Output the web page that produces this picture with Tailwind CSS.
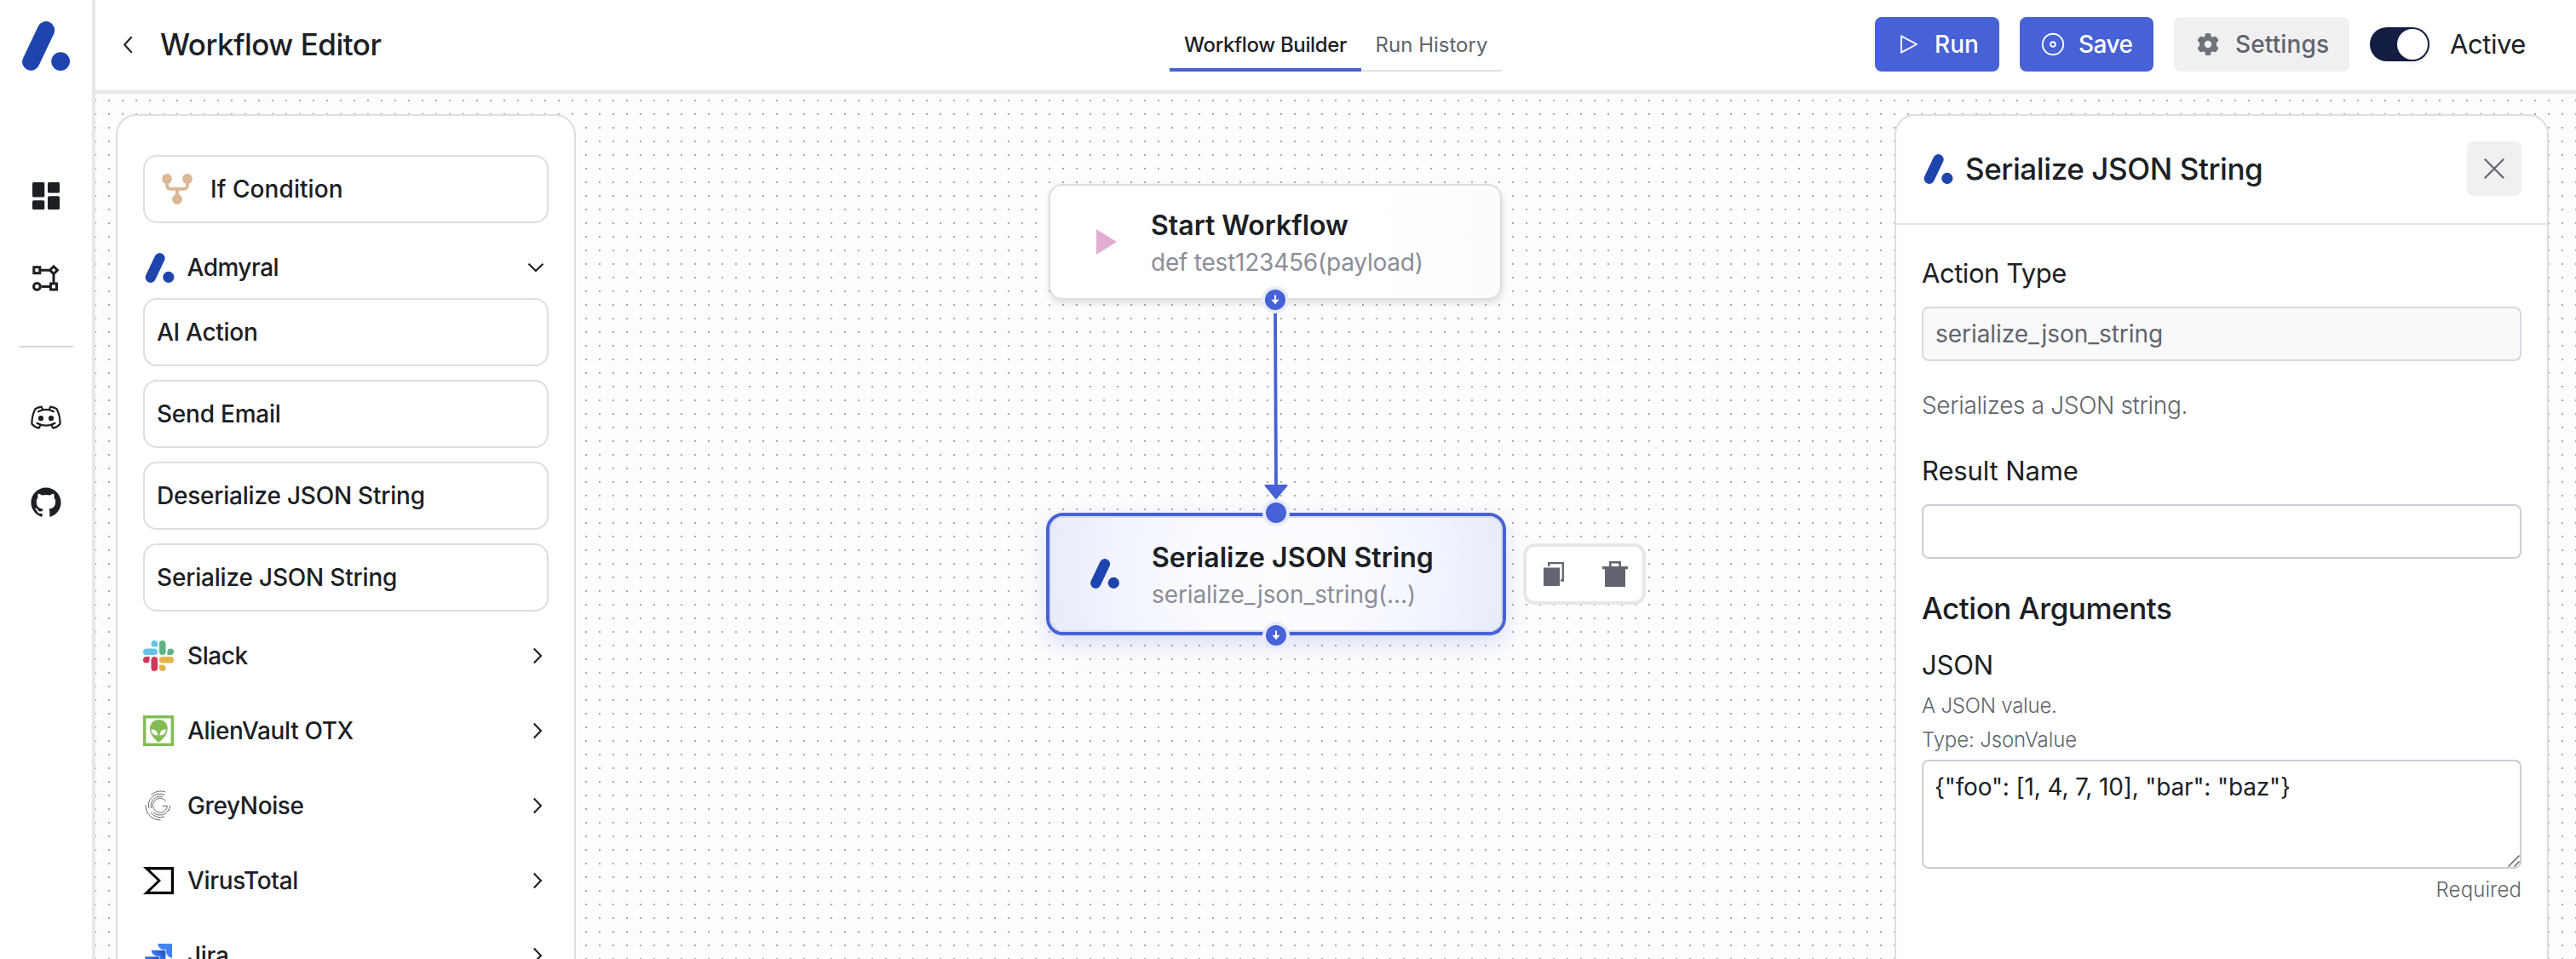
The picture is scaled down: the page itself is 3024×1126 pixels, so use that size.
<!DOCTYPE html>
<html lang="en">
<head>
<meta charset="utf-8">
<title>Workflow Editor</title>
<script src="https://cdn.jsdelivr.net/npm/@tailwindcss/browser@4"></script>
</head>
<body class="flex h-[1126px] w-[3024px] overflow-hidden bg-white font-[Inter,sans-serif] text-[#1c2024]">

<svg class="hidden">
  <symbol id="logo" viewBox="0 0 56 58">
    <path d="M10.3 47.6 28 10.3" stroke="#1e45ae" stroke-width="20.4" stroke-linecap="round" fill="none"/>
    <circle cx="45.1" cy="47.1" r="10.9" fill="#1e45ae"/>
  </symbol>
  <symbol id="chev-right" viewBox="0 0 12 20"><path d="M1.8 1.5 10 10 1.8 18.5" fill="none" stroke="#1c2024" stroke-width="2.1"/></symbol>
  <symbol id="slack-part" viewBox="0 0 24 24"><path d="M8.834 5.042a2.528 2.528 0 0 1-2.521-2.52A2.528 2.528 0 0 1 8.834 0a2.528 2.528 0 0 1 2.521 2.522v2.52H8.834zM8.834 6.313a2.528 2.528 0 0 1 2.521 2.521 2.528 2.528 0 0 1-2.521 2.521H2.522A2.528 2.528 0 0 1 0 8.834a2.528 2.528 0 0 1 2.522-2.521h6.312z"/></symbol>
  <symbol id="handle-out" viewBox="0 0 32 32"><circle cx="16" cy="16" r="16" fill="#e6ebfd"/><circle cx="16" cy="16" r="12" fill="#4761d6"/><path d="M16 10.5V17" stroke="#fff" stroke-width="2"/><path d="M11.4 15.8H20.6L16 21.2z" fill="#fff"/></symbol>
</svg>

<!-- Sidebar -->
<aside class="flex w-[112px] shrink-0 flex-col items-center border-r-4 border-[#e5e7eb]">
  <svg class="mt-[25px] h-[58px] w-[56px]"><use href="#logo"/></svg>
  <svg class="mt-[131px] size-8" viewBox="0 0 32 32" fill="#1c2024">
    <rect width="14.3" height="17.5" rx="1.5"/><rect x="18" width="14" height="12.6" rx="1.5"/>
    <rect y="21.3" width="14.3" height="10.7" rx="1.5"/><rect x="18" y="16.2" width="14" height="15.8" rx="1.5"/>
  </svg>
  <svg class="mt-16 size-8" viewBox="0 0 32 32" fill="none" stroke="#1c2024" stroke-width="3">
    <rect x="1.8" y="3.7" width="7" height="7"/><path d="M10 7.2h10M25 12v10M10.5 26.5H21"/>
    <path d="M25 2.8 29.4 7.2 25 11.6 20.6 7.2z"/><circle cx="5.4" cy="26.4" r="3.9"/><rect x="21.5" y="23" width="7" height="7"/>
  </svg>
  <div class="mt-16 h-0.5 w-16 bg-[#d9d9e0]"></div>
  <svg class="mt-[68px] h-7 w-9" viewBox="0 0 36 28" fill="none" stroke="#1c2024" stroke-width="2.2" stroke-linecap="round" stroke-linejoin="round">
    <path d="M14 4.6 12.8 1.7C9.6 2.2 7.4 2.8 5.4 4.2 3 8.6 1.4 14.5 1.4 21.6 3.5 24.4 6.3 25.9 9.6 26.6L11.6 23.4"/>
    <path d="M22 4.6 23.2 1.7C26.4 2.2 28.6 2.8 30.6 4.2 33 8.6 34.6 14.5 34.6 21.6 32.5 24.4 29.7 25.9 26.4 26.6L24.4 23.4"/>
    <path d="M9 7.2C14.5 4.4 21.5 4.4 27 7.2M7.5 20.8C13.5 24.6 22.5 24.6 28.5 20.8"/>
    <circle cx="12" cy="15.2" r="3.1" fill="#1c2024" stroke="none"/><circle cx="24" cy="15.2" r="3.1" fill="#1c2024" stroke="none"/>
  </svg>
  <svg class="mt-[68px] size-[36px]" viewBox="-.3 0 24.6 24.6" fill="#1c2024"><path d="M12 .297c-6.63 0-12 5.373-12 12 0 5.303 3.438 9.8 8.205 11.385.6.113.82-.258.82-.577 0-.285-.01-1.04-.015-2.04-3.338.724-4.042-1.61-4.042-1.61C4.422 18.07 3.633 17.7 3.633 17.7c-1.087-.744.084-.729.084-.729 1.205.084 1.838 1.236 1.838 1.236 1.07 1.835 2.809 1.305 3.495.998.108-.776.417-1.305.76-1.605-2.665-.3-5.466-1.332-5.466-5.93 0-1.31.465-2.38 1.235-3.22-.135-.303-.54-1.523.105-3.176 0 0 1.005-.322 3.3 1.23.96-.267 1.98-.399 3-.405 1.02.006 2.04.138 3 .405 2.28-1.552 3.285-1.23 3.285-1.23.645 1.653.24 2.873.12 3.176.765.84 1.23 1.91 1.23 3.22 0 4.61-2.805 5.625-5.475 5.92.42.36.81 1.096.81 2.22 0 1.606-.015 2.896-.015 3.286 0 .315.21.69.825.57C20.565 22.092 24 17.592 24 12.297c0-6.627-5.373-12-12-12"/></svg>
</aside>

<div class="flex min-w-0 grow flex-col">
  <!-- Header -->
  <header class="flex h-[110px] shrink-0 items-center border-b-4 border-[#e5e7eb] pb-[2px] whitespace-nowrap">
    <div class="flex w-[1261px] shrink-0 items-center">
      <svg class="ml-[32px] h-[21px] w-[12px]" viewBox="0 0 12 21" fill="none" stroke="#1c2024" stroke-width="2.1"><path d="M10.6 1.2 2.2 10.5 10.6 19.8"/></svg>
      <h1 class="ml-[32px] text-[35px] font-medium tracking-[-0.5px]">Workflow Editor</h1>
    </div>
    <nav class="flex h-16 w-[390px] shrink-0 text-[24px]">
      <div class="flex w-[225px] items-center justify-center border-b-4 border-[#4761d6] pt-[5px] font-medium tracking-[-0.35px]">Workflow Builder</div>
      <div class="flex w-[165px] items-center justify-center border-b-2 border-[#e0e1e6] pt-[3px] text-[#60646c]">Run History</div>
    </nav>
    <div class="ml-[438px] flex shrink-0 items-center gap-6 text-[28px] font-medium">
      <button class="flex h-16 w-[146px] items-center gap-[14px] rounded-lg bg-[#4761d6] pl-6 text-white">
        <svg class="size-8 shrink-0" viewBox="0 0 32 32" fill="none" stroke="#fff" stroke-width="1.9" stroke-linejoin="round"><path d="M7 6.3 25 16 7 25.7z"/></svg>Run
      </button>
      <button class="flex h-16 w-[157px] items-center gap-[14px] rounded-lg bg-[#4761d6] pl-[23px] tracking-[-0.5px] text-white">
        <svg class="size-8 shrink-0" viewBox="0 0 32 32" fill="none" stroke="#fff" stroke-width="1.9"><circle cx="16" cy="16" r="12.2"/><circle cx="16" cy="16" r="2.8"/></svg>Save
      </button>
      <button class="flex h-16 w-[206px] items-center gap-4 rounded-lg bg-[#f0f0f3] pl-6 tracking-[0.13px] text-[#60646c]">
        <svg class="size-8 shrink-0" viewBox="0 0 32 32"><path fill="#6e727a" stroke="#6e727a" stroke-width="2" stroke-linejoin="round" d="M14 4h4l.8 3.3 2.7 1.5 3.3-1 2.4 3.6-2.3 2.7v3.8l2.3 2.7-2.4 3.6-3.3-1-2.7 1.5L18 28h-4l-.8-3.3-2.7-1.5-3.3 1-2.4-3.6 2.3-2.7v-3.8L4.8 11.4l2.4-3.6 3.3 1 2.7-1.5z"/><circle cx="16" cy="16" r="4.2" fill="#f0f0f3"/></svg>Settings
      </button>
      <div class="flex h-10 w-[70px] items-center justify-end rounded-full bg-[#141d43] pr-0.5"><div class="size-9 rounded-full bg-white shadow-[0_2px_6px_rgba(0,0,0,0.15)]"></div></div>
      <span class="text-[31px] font-normal tracking-[-0.45px]">Active</span>
    </div>
  </header>

  <!-- Canvas -->
  <main class="relative flex h-[1016px] justify-between overflow-hidden bg-[#fdfdfd] pt-6 pr-8 pl-6">
    <svg class="absolute inset-0 size-full">
      <defs><pattern id="dots" width="16" height="16" patternUnits="userSpaceOnUse"><rect x="0" y="7" width="1" height="2" fill="#a9a9ac"/><rect x="15" y="7" width="1" height="2" fill="#a9a9ac"/></pattern></defs>
      <rect width="100%" height="100%" fill="url(#dots)"/>
    </svg>

    <!-- Action library -->
    <section class="relative h-[1100px] w-[540px] shrink-0 rounded-3xl border-2 border-[#dddde3] bg-white px-[30px] pt-[46px] text-[28px] font-medium">
      <div class="flex h-20 items-center rounded-2xl border-2 border-[#dddde3]">
        <svg class="ml-5 size-9" viewBox="0 0 36 36" fill="#d9b797"><circle cx="6" cy="6" r="5.9"/><circle cx="30" cy="6" r="5.9"/><circle cx="18" cy="30" r="5.9"/><path d="M6 8v5.2q0 4.6 4.6 4.6h14.8q4.6 0 4.6-4.6V8M18 18v9" fill="none" stroke="#d9b797" stroke-width="3.8"/></svg>
        <span class="ml-[21px] tracking-[0.08px]">If Condition</span>
      </div>
      <div class="mt-4 flex h-[72px] items-center">
        <svg class="ml-[1.5px] h-[35px] w-[35px]"><use href="#logo"/></svg>
        <span class="ml-[15px] tracking-[-0.5px]">Admyral</span>
        <svg class="mr-[5px] ml-auto h-[12px] w-[20px]" viewBox="0 0 20 12" fill="none" stroke="#1c2024" stroke-width="2.1"><path d="M1.5 1.8 10 10 18.5 1.8"/></svg>
      </div>
      <div class="flex flex-col gap-4">
        <div class="flex h-20 items-center rounded-2xl border-2 border-[#dddde3] pl-[14px] tracking-[-0.28px]">AI Action</div>
        <div class="flex h-20 items-center rounded-2xl border-2 border-[#dddde3] pl-[14px] tracking-[-0.23px]">Send Email</div>
        <div class="flex h-20 items-center rounded-2xl border-2 border-[#dddde3] pl-[14px] tracking-[-0.22px]">Deserialize JSON String</div>
        <div class="flex h-20 items-center rounded-2xl border-2 border-[#dddde3] pl-[14px] tracking-[-0.19px]">Serialize JSON String</div>
      </div>
      <div class="mt-2 flex h-[88px] items-center gap-4">
        <svg class="size-9" viewBox="0 0 24 24"><use href="#slack-part" width="24" height="24" fill="#65c2e8"/><use href="#slack-part" width="24" height="24" fill="#5cb382" transform="rotate(90 12 12)"/><use href="#slack-part" width="24" height="24" fill="#e3b34c" transform="rotate(180 12 12)"/><use href="#slack-part" width="24" height="24" fill="#cf375c" transform="rotate(270 12 12)"/></svg>
        <span class="tracking-[-0.4px]">Slack</span>
        <svg class="mr-[7px] ml-auto h-5 w-3"><use href="#chev-right"/></svg>
      </div>
      <div class="flex h-[88px] items-center gap-4">
        <svg class="size-9" viewBox="0 0 36 36"><rect x="1.7" y="1.7" width="32.6" height="32.6" fill="#fff" stroke="#83bc55" stroke-width="3.4"/><path d="M18.3 5C24.6 5 28.7 9.4 28.7 15.3 28.7 22.5 23 28.8 18.3 31.5 13.6 28.8 8 22.5 8 15.3 8 9.4 12.2 5 18.3 5z" fill="#83bc55"/><path d="M9.6 16.2C14 16 17.3 18.8 17.3 23.3 13 23.8 9.6 21 9.6 16.2zM27 16.2C22.6 16 19.4 18.8 19.4 23.3 23.7 23.8 27 21 27 16.2z" fill="#fff"/></svg>
        <span class="tracking-[-0.36px]">AlienVault OTX</span>
        <svg class="mr-[7px] ml-auto h-5 w-3"><use href="#chev-right"/></svg>
      </div>
      <div class="flex h-[88px] items-center gap-4">
        <svg class="size-9" viewBox="0 0 36 36" fill="none" stroke="#66676c" stroke-width="1">
          <path d="M26.8 12.8A8.4 8.4 0 1 0 28.3 18.3H22.5"/>
          <path d="M23 7.4A11 11 0 0 0 9.6 21M11.5 25A11 11 0 0 0 30 22.5"/>
          <path d="M25.5 5.4A13.5 13.5 0 0 0 6.8 21M9 26A13.5 13.5 0 0 0 25 30.8"/>
          <path d="M26 1.9A17 17 0 0 0 9.5 5.200M3 17A17 17 0 0 0 20.5 34.9M31.6 18A12 12 0 0 1 30 24"/>
        </svg>
        <span class="tracking-[-0.38px]">GreyNoise</span>
        <svg class="mr-[7px] ml-auto h-5 w-3"><use href="#chev-right"/></svg>
      </div>
      <div class="flex h-[88px] items-center gap-4">
        <svg class="h-8 w-9" viewBox="0 0 36 32"><path fill="#000" fill-rule="evenodd" d="M0 0H36V32H0L17 16zM7.8 3.3 21 16 7.8 28.7H32.8V3.3z"/></svg>
        <span class="tracking-[-0.32px]">VirusTotal</span>
        <svg class="mr-[7px] ml-auto h-5 w-3"><use href="#chev-right"/></svg>
      </div>
      <div class="flex h-[88px] items-center gap-4">
        <svg class="mt-[4px] mr-[2px] ml-[2px] size-8" viewBox="0 0 24 24">
          <defs><linearGradient id="jg" x1="1" y1="0" x2=".3" y2=".8"><stop offset=".15" stop-color="#2155c4"/><stop offset=".9" stop-color="#4484fb"/></linearGradient></defs>
          <path fill="url(#jg)" d="M11.571 11.513H0a5.218 5.218 0 0 0 5.232 5.215h2.13v2.057A5.215 5.215 0 0 0 12.575 24V12.518a1.005 1.005 0 0 0-1.005-1.005z"/>
          <path fill="url(#jg)" d="M17.294 5.757H5.736a5.215 5.215 0 0 0 5.215 5.214h2.129v2.058a5.218 5.218 0 0 0 5.215 5.214V6.758a1.001 1.001 0 0 0-1.001-1.001z"/>
          <path fill="#4484fb" d="M23.013 0H11.455a5.215 5.215 0 0 0 5.215 5.215h2.129v2.057A5.215 5.215 0 0 0 24 12.483V1.005A1.001 1.001 0 0 0 23.013 0Z"/>
        </svg>
        <span class="tracking-[-0.3px]">Jira</span>
        <svg class="mr-[7px] ml-auto h-5 w-3"><use href="#chev-right"/></svg>
      </div>
    </section>

    <!-- Action details -->
    <section class="relative h-[1100px] w-[768px] shrink-0 rounded-3xl border-2 border-[#dddde3] bg-white whitespace-nowrap">
      <div class="flex h-[128px] items-center border-b-2 border-[#e5e7eb] px-[30px] pb-[2px]">
        <svg class="ml-[2px] h-[35px] w-[35px]"><use href="#logo"/></svg>
        <h2 class="ml-[14px] text-[35px] leading-[48px] font-medium tracking-[-0.4px]">Serialize JSON String</h2>
        <button class="ml-auto flex size-16 items-center justify-center rounded-lg bg-[#f0f0f3]">
          <svg class="size-[24px]" viewBox="0 0 24 24" stroke="#60646c" stroke-width="2.1"><path d="M.8.8 23.2 23.2M23.2.8.8 23.2"/></svg>
        </button>
      </div>
      <div class="flex flex-col px-[30px] pt-[33px]">
        <label class="text-[31px] leading-[48px] tracking-[-0.46px]">Action Type</label>
        <div class="mt-[15px] flex h-16 items-center rounded-lg border-2 border-[#d9d9e0] bg-[#f9f9fb] pl-[14px] text-[28px] tracking-[-0.05px] text-[#60646c]">serialize_json_string</div>
        <p class="mt-[32px] text-[28px] leading-[40px] font-light tracking-[-0.35px] text-[#60646c]">Serializes a JSON string.</p>
        <label class="mt-[33px] text-[31px] leading-[48px] tracking-[-0.12px]">Result Name</label>
        <div class="mt-[15px] h-16 rounded-lg border-2 border-[#cdced6]"></div>
        <h3 class="mt-[34px] text-[35px] leading-[48px] font-medium tracking-[-0.45px]">Action Arguments</h3>
        <label class="mt-[19px] text-[31px] leading-[48px] tracking-[-0.2px]">JSON</label>
        <p class="mt-[4px] text-[24px] leading-[40px] font-light tracking-[-0.23px] text-[#60646c]">A JSON value.</p>
        <p class="text-[24px] leading-[40px] font-light tracking-[-0.13px] text-[#60646c]">Type: JsonValue</p>
        <div class="relative mt-[3px] h-[128px] rounded-lg border-2 border-[#cdced6] pt-[10px] pl-[13px] text-[28px] leading-[40px] tracking-[-0.15px]">{"foo": [1, 4, 7, 10], "bar": "baz"}
          <svg class="absolute right-0 bottom-0 size-[14px]" viewBox="0 0 14 14" stroke="#55565a" stroke-width="1.4"><path d="M.5 13.5 13.5.5M7.5 13.5 13.5 7.5"/></svg>
        </div>
        <p class="mt-[5px] text-right text-[24px] leading-[40px] font-light tracking-[0.1px] text-[#60646c]">Required</p>
      </div>
    </section>

    <!-- Start node -->
    <div class="absolute top-[106px] left-[1119px] h-[136px] w-[532px] rounded-[16px] border-2 border-[#dddde3] bg-linear-to-r from-white from-70% to-[#fcfcfd] pt-[25px] pl-[118px] whitespace-nowrap shadow-[1px_4px_8px_rgba(0,0,0,0.13)]">
      <svg class="absolute top-[50px] left-[52px] h-[32px] w-[26px]" viewBox="0 0 26 32"><path d="M2 1 26 16 2 31z" fill="#e3aed2"/></svg>
      <div class="text-[32px] leading-[44px] font-semibold">Start Workflow</div>
      <div class="text-[28px] leading-[43px] tracking-[-0.22px] text-[#8b8d98]">def test123456(payload)</div>
    </div>

    <!-- Selected node -->
    <div class="absolute top-[492px] left-[1116px] h-[144px] w-[540px] rounded-[20px] border-4 border-[#4761d6] shadow-[0_10px_28px_rgba(71,97,214,0.2)]">
      <div class="size-full rounded-[16px] border-2 border-[#d8dbe8] bg-[radial-gradient(circle_at_center,#fdfdff_0%,#fafbff_35%,#f1f4fe_70%,#e8ebf9_100%)] pt-[25px] pl-[118px] whitespace-nowrap">
        <svg class="absolute top-[50px] left-[48px] h-[35px] w-[34px]"><use href="#logo"/></svg>
        <div class="text-[32px] leading-[44px] font-semibold tracking-[0.03px]">Serialize JSON String</div>
        <div class="text-[28px] leading-[42px] tracking-[-0.1px] text-[#8b8d98]">serialize_json_string(...)</div>
      </div>
    </div>

    <!-- Edge and handles -->
    <svg class="absolute top-[226px] left-[1366px] h-[426px] w-[40px]" viewBox="0 0 40 426">
      <path d="M19 30 20 236" fill="none" stroke="#4761d6" stroke-width="3.8"/>
      <path d="M7.5 234H32.5L20 249z" fill="#4761d6" stroke="#4761d6" stroke-width="2" stroke-linejoin="round"/>
      <use href="#handle-out" x="3" y="0" width="32" height="32"/>
      <circle cx="20" cy="266" r="16" fill="#e6ebfd"/><circle cx="20" cy="266" r="12" fill="#4761d6"/>
      <use href="#handle-out" x="4" y="394" width="32" height="32"/>
    </svg>

    <!-- Node toolbar -->
    <div class="absolute top-[528px] left-[1676px] flex h-[72px] w-[144px] items-center justify-between rounded-[14px] border-4 border-[#e5e7eb] bg-white pr-[17px] pl-[20px]">
      <svg class="h-7 w-6" viewBox="0 0 24 28"><path d="M0 6.5H19V28H0z" fill="#62656f"/><path d="M6.2 5V1.2H22.8V21.5H20" fill="none" stroke="#62656f" stroke-width="2.3"/></svg>
      <svg class="h-[30px] w-[30px]" viewBox="0 0 30 30"><path d="M0 6H30V9.3H27V30H3V9.3H0z" fill="#62656f"/><path d="M9.3 7V1.3H20.7V7" fill="none" stroke="#62656f" stroke-width="2.6"/></svg>
    </div>
  </main>
</div>
</body>
</html>
